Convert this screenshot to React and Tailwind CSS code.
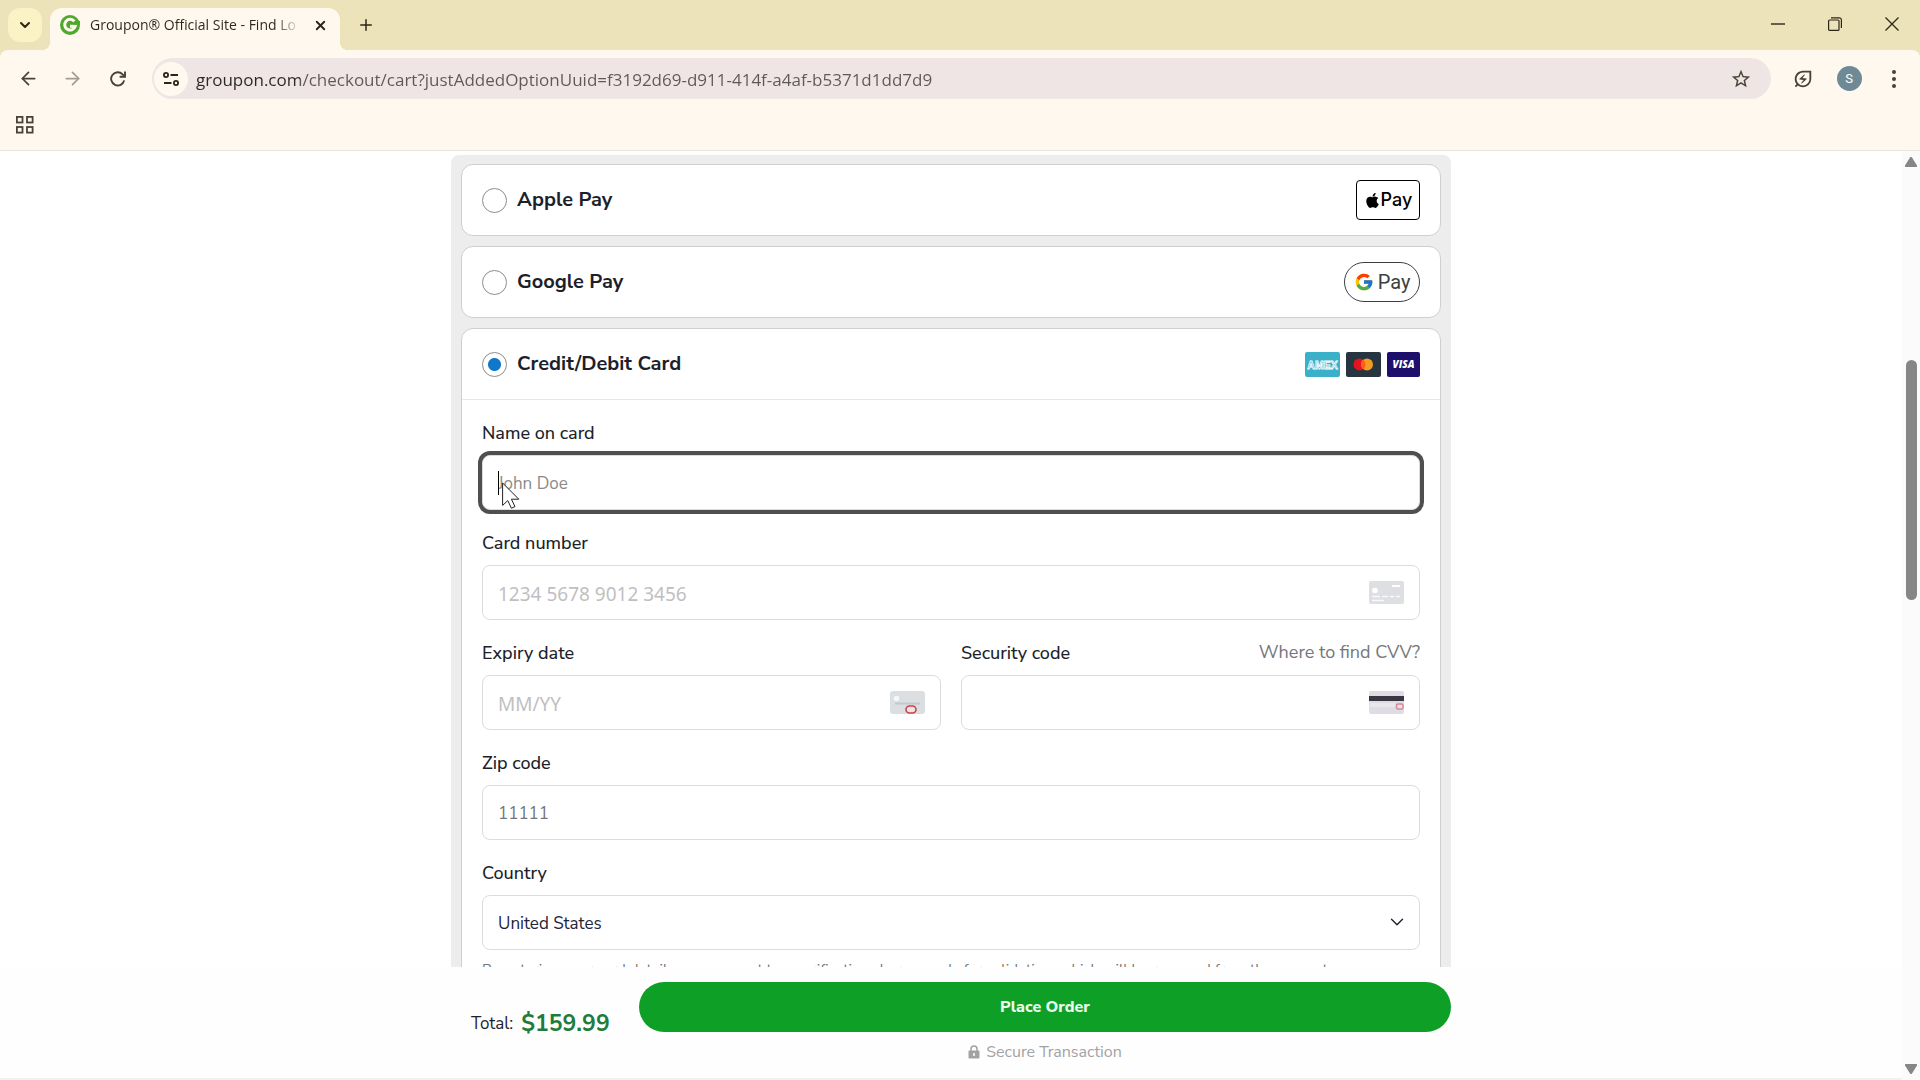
import { useState } from "react";
import { FaApple } from "react-icons/fa";
import { FcGoogle } from "react-icons/fc";
import { MdOutlineEnergySavingsLeaf, MdStarBorder } from "react-icons/md";
import { ArrowLeft, ArrowRight, ChevronDown, Plus, X } from "lucide-react";

const fieldClass =
  "h-[55px] w-full rounded-lg border border-[#dcdcdc] bg-white px-[15px] pt-0.5 text-[17px] text-[#23243a] outline-none";
const labelClass = "flex h-[25px] items-center text-lg font-medium text-[#1d1f2b]";
const windowButtonClass = "flex h-12 w-[57px] items-center justify-center text-[#2b2717]";
const toolButtonClass = "flex h-10 shrink-0 items-center justify-center text-[#474336]";

function GrouponMark() {
  return (
    <svg viewBox="0 0 20 20" className="size-5 shrink-0">
      <circle cx="10" cy="10" r="10" fill="#4fa82e" />
      <path
        d="M14.4 6.4A5.4 5.4 0 1 0 15.3 11.200H10"
        fill="none"
        stroke="#fff8ee"
        strokeWidth="3"
      />
      <path d="M13 7.800l7-2v4h-6z" fill="#4fa82e" />
    </svg>
  );
}

function TitleBar() {
  return (
    <div className="flex h-[50px] items-end bg-[#ece3bb]">
      <button
        aria-label="Search tabs"
        className="mb-2 ml-2 flex h-[34px] w-[34px] shrink-0 items-center justify-center rounded-xl bg-[#fbf2c5] text-[#2b2717]"
      >
        <ChevronDown size={16} strokeWidth={3} />
      </button>
      <span className="size-2 bg-[radial-gradient(circle_at_0_0,#ece3bb_8px,#fff8ee_8px)]" />
      <div className="flex h-[42px] w-[290px] items-center rounded-t-xl bg-[#fff8ee] pr-2 pb-2 pl-[10px]">
        <GrouponMark />
        <span className="ml-[10px] w-[210px] overflow-hidden bg-[linear-gradient(90deg,#2b2717_185px,transparent_210px)] bg-clip-text font-['Open_Sans',sans-serif] text-sm whitespace-nowrap text-transparent">
          Groupon® Official Site - Find Lo
        </span>
        <button aria-label="Close tab" className="ml-auto p-1 text-[#2b2717]">
          <X size={15} strokeWidth={3} />
        </button>
      </div>
      <span className="size-2 bg-[radial-gradient(circle_at_100%_0,#ece3bb_8px,#fff8ee_8px)]" />
      <button
        aria-label="New tab"
        className="flex h-[50px] w-9 shrink-0 items-center justify-center text-[#2b2717]"
      >
        <Plus size={18} strokeWidth={2} />
      </button>
      <div className="ml-auto flex self-start">
        <button aria-label="Minimize" className={windowButtonClass}>
          <svg viewBox="0 0 14 14" className="size-3.5">
            <path d="M0 7h14" stroke="currentColor" strokeWidth="1.4" />
          </svg>
        </button>
        <button aria-label="Restore" className={windowButtonClass}>
          <svg viewBox="0 0 14 14" className="size-3.5" fill="none" stroke="currentColor" strokeWidth="1.2">
            <rect x="0.6" y="3" width="10.4" height="10.4" rx="1" />
            <path d="M3 0.8h8.2a2.2 2.2 0 0 1 2.2 2.2v8" />
          </svg>
        </button>
        <button aria-label="Close" className={windowButtonClass}>
          <svg viewBox="0 0 14 14" className="size-3.5" stroke="currentColor" strokeWidth="1.3">
            <path d="M0.5 0.5l13 13M13.5 0.5l-13 13" />
          </svg>
        </button>
      </div>
    </div>
  );
}

function Toolbar() {
  return (
    <div className="bg-[#ece3bb]">
      <div className="rounded-t-lg border-b border-[#ece4da] bg-[#fff8ee]">
        <div className="flex items-center pt-2 pr-1 pl-[6px]">
          <button aria-label="Back" className={`${toolButtonClass} w-11`}>
            <ArrowLeft size={21} strokeWidth={2} />
          </button>
          <button aria-label="Forward" className={`${toolButtonClass} w-11 opacity-50`}>
            <ArrowRight size={21} strokeWidth={2} />
          </button>
          <button aria-label="Reload" className={`${toolButtonClass} w-12`}>
            <svg viewBox="0 0 16 16" className="size-4" fill="none" stroke="currentColor" strokeWidth="1.9">
              <path d="M14.2 9.4A6.6 6.6 0 1 1 12.6 3.4L14.6 5.4" />
              <path d="M15 0.4v5.4H9.6" />
            </svg>
          </button>
          <div className="ml-[10px] flex h-[41px] flex-1 items-center rounded-full bg-[#eee5e4] pr-[19px] pl-[2px]">
            <button
              aria-label="View site information"
              className="flex size-[34px] items-center justify-center rounded-full bg-[#fff8ee] text-[#2b2717]"
            >
              <svg viewBox="0 0 16 14" className="h-3.5 w-4" fill="none" stroke="currentColor" strokeWidth="1.8">
                <circle cx="3" cy="3" r="2.1" />
                <path d="M7.5 3H15M1 11h7.5" />
                <circle cx="13" cy="11" r="2.1" />
              </svg>
            </button>
            <input
              aria-label="Address"
              readOnly
              value="groupon.com/checkout/cart?justAddedOptionUuid=f3192d69-d911-414f-a4af-b5371d1dd7d9"
              className="ml-2 min-w-0 flex-1 bg-[linear-gradient(90deg,#2b2724_104px,#5f5855_104px)] bg-clip-text pt-0.5 font-['Open_Sans',sans-serif] text-[17px] text-transparent outline-none"
            />
            <button aria-label="Bookmark this tab" className="text-[#474336]">
              <MdStarBorder size={22} />
            </button>
          </div>
          <button aria-label="Energy saver" className={`${toolButtonClass} ml-[9px] w-[46px]`}>
            <MdOutlineEnergySavingsLeaf size={22} />
          </button>
          <button aria-label="Profile" className={`${toolButtonClass} w-[46px]`}>
            <span className="flex size-[25px] items-center justify-center rounded-full bg-[#6f8a97] font-[Roboto,sans-serif] text-[13px] text-white">
              S
            </span>
          </button>
          <button aria-label="Menu" className={`${toolButtonClass} w-11`}>
            <svg viewBox="0 0 4 18" className="h-[18px] w-1" fill="currentColor">
              <circle cx="2" cy="2" r="2" />
              <circle cx="2" cy="9" r="2" />
              <circle cx="2" cy="16" r="2" />
            </svg>
          </button>
        </div>
        <div className="flex h-[51px] items-center pl-4">
          <button aria-label="Apps" className="text-[#474336]">
            <svg viewBox="0 0 18 18" className="size-[18px]" fill="none" stroke="currentColor" strokeWidth="1.8">
              <rect x="0.9" y="0.9" width="5.6" height="5.6" />
              <rect x="11" y="0.9" width="5.6" height="5.6" />
              <rect x="0.9" y="11" width="5.6" height="5.6" />
              <rect x="11" y="11" width="5.6" height="5.6" />
            </svg>
          </button>
        </div>
      </div>
    </div>
  );
}

function PaymentOption({ id, label, checked, onSelect, children }) {
  return (
    <div className="flex h-[70px] items-center px-5">
      <input
        type="radio"
        id={id}
        name="payment"
        checked={checked}
        onChange={onSelect}
        className="size-[25px] appearance-none rounded-full border border-[#8c8c8c] bg-white checked:bg-[radial-gradient(circle,#1177c9_6px,#fff_7px)]"
      />
      <label htmlFor={id} className="ml-[10px] flex-1 text-xl font-bold text-[#1d1f2b]">
        {label}
      </label>
      {children}
    </div>
  );
}

function CardBrands() {
  return (
    <div className="flex gap-[6px]">
      <svg viewBox="0 0 35 25" className="h-[25px] w-[35px]">
        <rect width="35" height="25" rx="2" fill="#3bb0c9" />
        <text
          x="17.5"
          y="16.5"
          textAnchor="middle"
          fontFamily="Liberation Sans, sans-serif"
          fontSize="10.5"
          fontWeight="700"
          fill="#3bb0c9"
          stroke="#fff"
          strokeWidth="0.8"
        >
          AMEX
        </text>
      </svg>
      <svg viewBox="0 0 35 25" className="h-[25px] w-[35px]">
        <rect width="35" height="25" rx="2" fill="#26353f" />
        <circle cx="13.500" cy="12.5" r="6" fill="#e3131f" />
        <circle cx="21" cy="12.5" r="6" fill="#f59a22" />
        <path d="M17.25 7.8a6 6 0 0 1 0 9.4a6 6 0 0 1 0-9.4" fill="#f8601d" />
      </svg>
      <svg viewBox="0 0 33 25" className="h-[25px] w-[33px]">
        <rect width="33" height="25" rx="2" fill="#1d0f6b" />
        <text
          x="16.5"
          y="16"
          textAnchor="middle"
          fontFamily="Open Sans, sans-serif"
          fontSize="10"
          fontWeight="800"
          fontStyle="italic"
          fill="#fff"
        >
          VISA
        </text>
      </svg>
    </div>
  );
}

function NumberIcon() {
  return (
    <svg viewBox="0 0 35 23" className="h-[23px] w-[35px] shrink-0">
      <rect width="35" height="23" rx="2" fill="#dddfe3" />
      <circle cx="6" cy="9.5" r="2.8" fill="#fff" />
      <path d="M23 5h8" stroke="#fff" strokeWidth="2" />
      <path d="M3 15.5h8m2 0h6m2 0h4m2 0h4M3 19.5h12" stroke="#f8f9fa" strokeWidth="1.6" />
    </svg>
  );
}

function ExpiryIcon() {
  return (
    <svg viewBox="0 0 35 23" className="h-[23px] w-[35px] shrink-0">
      <rect width="35" height="23" rx="3" fill="#dcdfe2" />
      <circle cx="6.5" cy="7.5" r="2.8" fill="#f7f7f7" />
      <path d="M5 12.5h25" stroke="#c4c7cb" strokeWidth="2" />
      <rect x="16" y="15" width="10" height="7" rx="3.5" fill="#f3e3e4" stroke="#c9434c" strokeWidth="1.6" />
    </svg>
  );
}

function CvvIcon() {
  return (
    <svg viewBox="0 0 35 23" className="h-[23px] w-[35px] shrink-0">
      <rect width="35" height="23" rx="2" fill="#dfdde3" />
      <rect y="5" width="35" height="5" fill="#3a3743" />
      <rect x="1" y="12" width="25" height="4" fill="#e9e7ec" />
      <rect x="27.5" y="13" width="6.5" height="5" rx="1.5" fill="#f2dfe4" stroke="#d08a9a" strokeWidth="1.5" />
    </svg>
  );
}

function IconField({ icon, ...props }) {
  return (
    <div className="flex h-[55px] items-center rounded-lg border border-[#dcdcdc] bg-white px-[15px]">
      <input
        {...props}
        className="h-full w-full min-w-0 pt-0.5 font-['Noto_Sans',sans-serif] text-[19px] text-[#23243a] outline-none placeholder:text-[#bfbfc2]"
      />
      {icon}
    </div>
  );
}

function CardForm() {
  return (
    <form className="flex flex-col gap-5 p-5">
      <div className="flex flex-col gap-[10px]">
        <label htmlFor="card-name" className={labelClass}>
          Name on card
        </label>
        <div className="relative">
          <input
            id="card-name"
            placeholder="John Doe"
            className={`${fieldClass} ring-4 ring-[#4f4f4f] placeholder:text-[#8a8a8a]`}
          />
          <span className="absolute top-4 left-4 h-6 w-px bg-black" />
          <svg viewBox="0 0 18 27" className="absolute top-[27px] left-5 h-[27px] w-[18px]">
            <path
              d="M0.6 1v22.4l5.2-4.8 3.6 7.6 3.6-1.6-3.6-7.4h7.4z"
              fill="#fff"
              stroke="#222"
              strokeWidth="1"
            />
          </svg>
        </div>
      </div>

      <div className="flex flex-col gap-[10px]">
        <label htmlFor="card-number" className={labelClass}>
          Card number
        </label>
        <IconField id="card-number" placeholder="1234 5678 9012 3456" icon={<NumberIcon />} />
      </div>

      <div className="grid grid-cols-2 gap-5">
        <div className="flex flex-col gap-[10px]">
          <label htmlFor="card-expiry" className={labelClass}>
            Expiry date
          </label>
          <IconField id="card-expiry" placeholder="MM/YY" icon={<ExpiryIcon />} />
        </div>
        <div className="flex flex-col gap-[10px]">
          <div className="flex items-center justify-between">
            <label htmlFor="card-cvv" className={labelClass}>
              Security code
            </label>
            <a href="#cvv" className="text-lg leading-[25px] text-[#75767c]">
              Where to find CVV?
            </a>
          </div>
          <IconField id="card-cvv" icon={<CvvIcon />} />
        </div>
      </div>

      <div className="flex flex-col gap-[10px]">
        <label htmlFor="zip" className={labelClass}>
          Zip code
        </label>
        <input
          id="zip"
          placeholder="11111"
          className={`${fieldClass} placeholder:text-[#75767c]`}
        />
      </div>

      <div className="flex flex-col gap-[10px]">
        <label htmlFor="country" className={labelClass}>
          Country
        </label>
        <div className="relative">
          <select id="country" defaultValue="us" className={`${fieldClass} appearance-none`}>
            <option value="us">United States</option>
            <option value="ca">Canada</option>
          </select>
          <ChevronDown
            size={22}
            strokeWidth={1.5}
            className="pointer-events-none absolute top-4 right-3 text-[#1d1f2b]"
          />
        </div>
        <p className="text-[15px] leading-5 text-[#75767c]">
          By entering your card details, you consent to a verification charge made for validation,
          which will be removed from the account
        </p>
      </div>
    </form>
  );
}

function OrderBar() {
  return (
    <div className="border-b-2 border-[#f1f1f1] bg-[#fefefe] pt-[15px] pb-[6px]">
      <div className="mx-auto flex max-w-[1000px]">
        <div className="flex h-[84px] w-[188px] shrink-0 items-center gap-2 pl-5">
          <span className="text-[17px] text-[#1d1f2b]">Total:</span>
          <span className="text-[23px] font-bold text-[#1e7d3c]">$159.99</span>
        </div>
        <div className="flex-1">
          <button className="h-[50px] w-full rounded-full bg-[#0e9f27] text-base font-extrabold text-[#eafbe9]">
            Place Order
          </button>
          <div className="flex h-10 items-center justify-center gap-[6px] text-base text-[#a2a2a5]">
            <svg viewBox="0 0 12 14" className="h-3.5 w-3">
              <path d="M3 7V4a3 3 0 0 1 6 0v3" fill="none" stroke="currentColor" strokeWidth="1.5" />
              <rect x="0.5" y="5.5" width="11" height="8" rx="1" fill="currentColor" />
              <path d="M6 8v3" stroke="#fff" strokeWidth="1.5" />
            </svg>
            Secure Transaction
          </div>
        </div>
      </div>
    </div>
  );
}

function Scrollbar() {
  return (
    <div className="flex w-[18px] shrink-0 flex-col items-center bg-[#fbfbfb] pt-[6px] pb-[6px]">
      <svg viewBox="0 0 12 10" className="h-[10px] w-3 fill-[#868686]">
        <path d="M5 .6a1.2 1.2 0 0 1 2 0l5 8a1 1 0 0 1-.8 1.4H.8A1 1 0 0 1 0 8.600z" />
      </svg>
      <div className="flex w-full flex-1 flex-col items-center pt-[193px]">
        <div className="h-[240px] w-[11px] rounded-full bg-[#868686]" />
      </div>
      <svg viewBox="0 0 12 10" className="h-[10px] w-3 rotate-180 fill-[#868686]">
        <path d="M5 .6a1.2 1.2 0 0 1 2 0l5 8a1 1 0 0 1-.8 1.4H.8A1 1 0 0 1 0 8.600z" />
      </svg>
    </div>
  );
}

export default function App() {
  const [method, setMethod] = useState("card");

  return (
    <div className="flex h-screen flex-col overflow-hidden bg-white">
      <TitleBar />
      <Toolbar />
      <div className="flex min-h-0 flex-1">
        <div className="flex min-w-0 flex-1 flex-col font-[Nunito_Sans,'Open_Sans',sans-serif]">
          <main className="min-h-0 flex-1 overflow-hidden pt-1">
            <div className="mx-auto flex max-w-[1000px] flex-col gap-[10px] rounded-t-lg bg-[#ededed] px-[10px] pt-[9px]">
              <section className="rounded-xl border border-[#cfcfcf] bg-white">
                <PaymentOption
                  id="apple-pay"
                  label="Apple Pay"
                  checked={method === "apple"}
                  onSelect={() => setMethod("apple")}
                >
                  <span className="flex h-10 w-16 items-center justify-center rounded border border-black font-[Inter,sans-serif] text-lg font-medium text-black">
                    <FaApple size={17} />
                    Pay
                  </span>
                </PaymentOption>
              </section>
              <section className="rounded-xl border border-[#cfcfcf] bg-white">
                <PaymentOption
                  id="google-pay"
                  label="Google Pay"
                  checked={method === "google"}
                  onSelect={() => setMethod("google")}
                >
                  <span className="flex h-10 w-[76px] items-center justify-center gap-1 rounded-full border border-[#3c4043] font-[Roboto,sans-serif] text-xl text-[#3c4043]">
                    <FcGoogle size={20} />
                    Pay
                  </span>
                </PaymentOption>
              </section>
              <section className="rounded-t-xl border border-[#cfcfcf] bg-white">
                <div className="border-b border-[#e6e6e6]">
                  <PaymentOption
                    id="card"
                    label="Credit/Debit Card"
                    checked={method === "card"}
                    onSelect={() => setMethod("card")}
                  >
                    <CardBrands />
                  </PaymentOption>
                </div>
                <CardForm />
              </section>
            </div>
          </main>
          <OrderBar />
        </div>
        <Scrollbar />
      </div>
    </div>
  );
}
